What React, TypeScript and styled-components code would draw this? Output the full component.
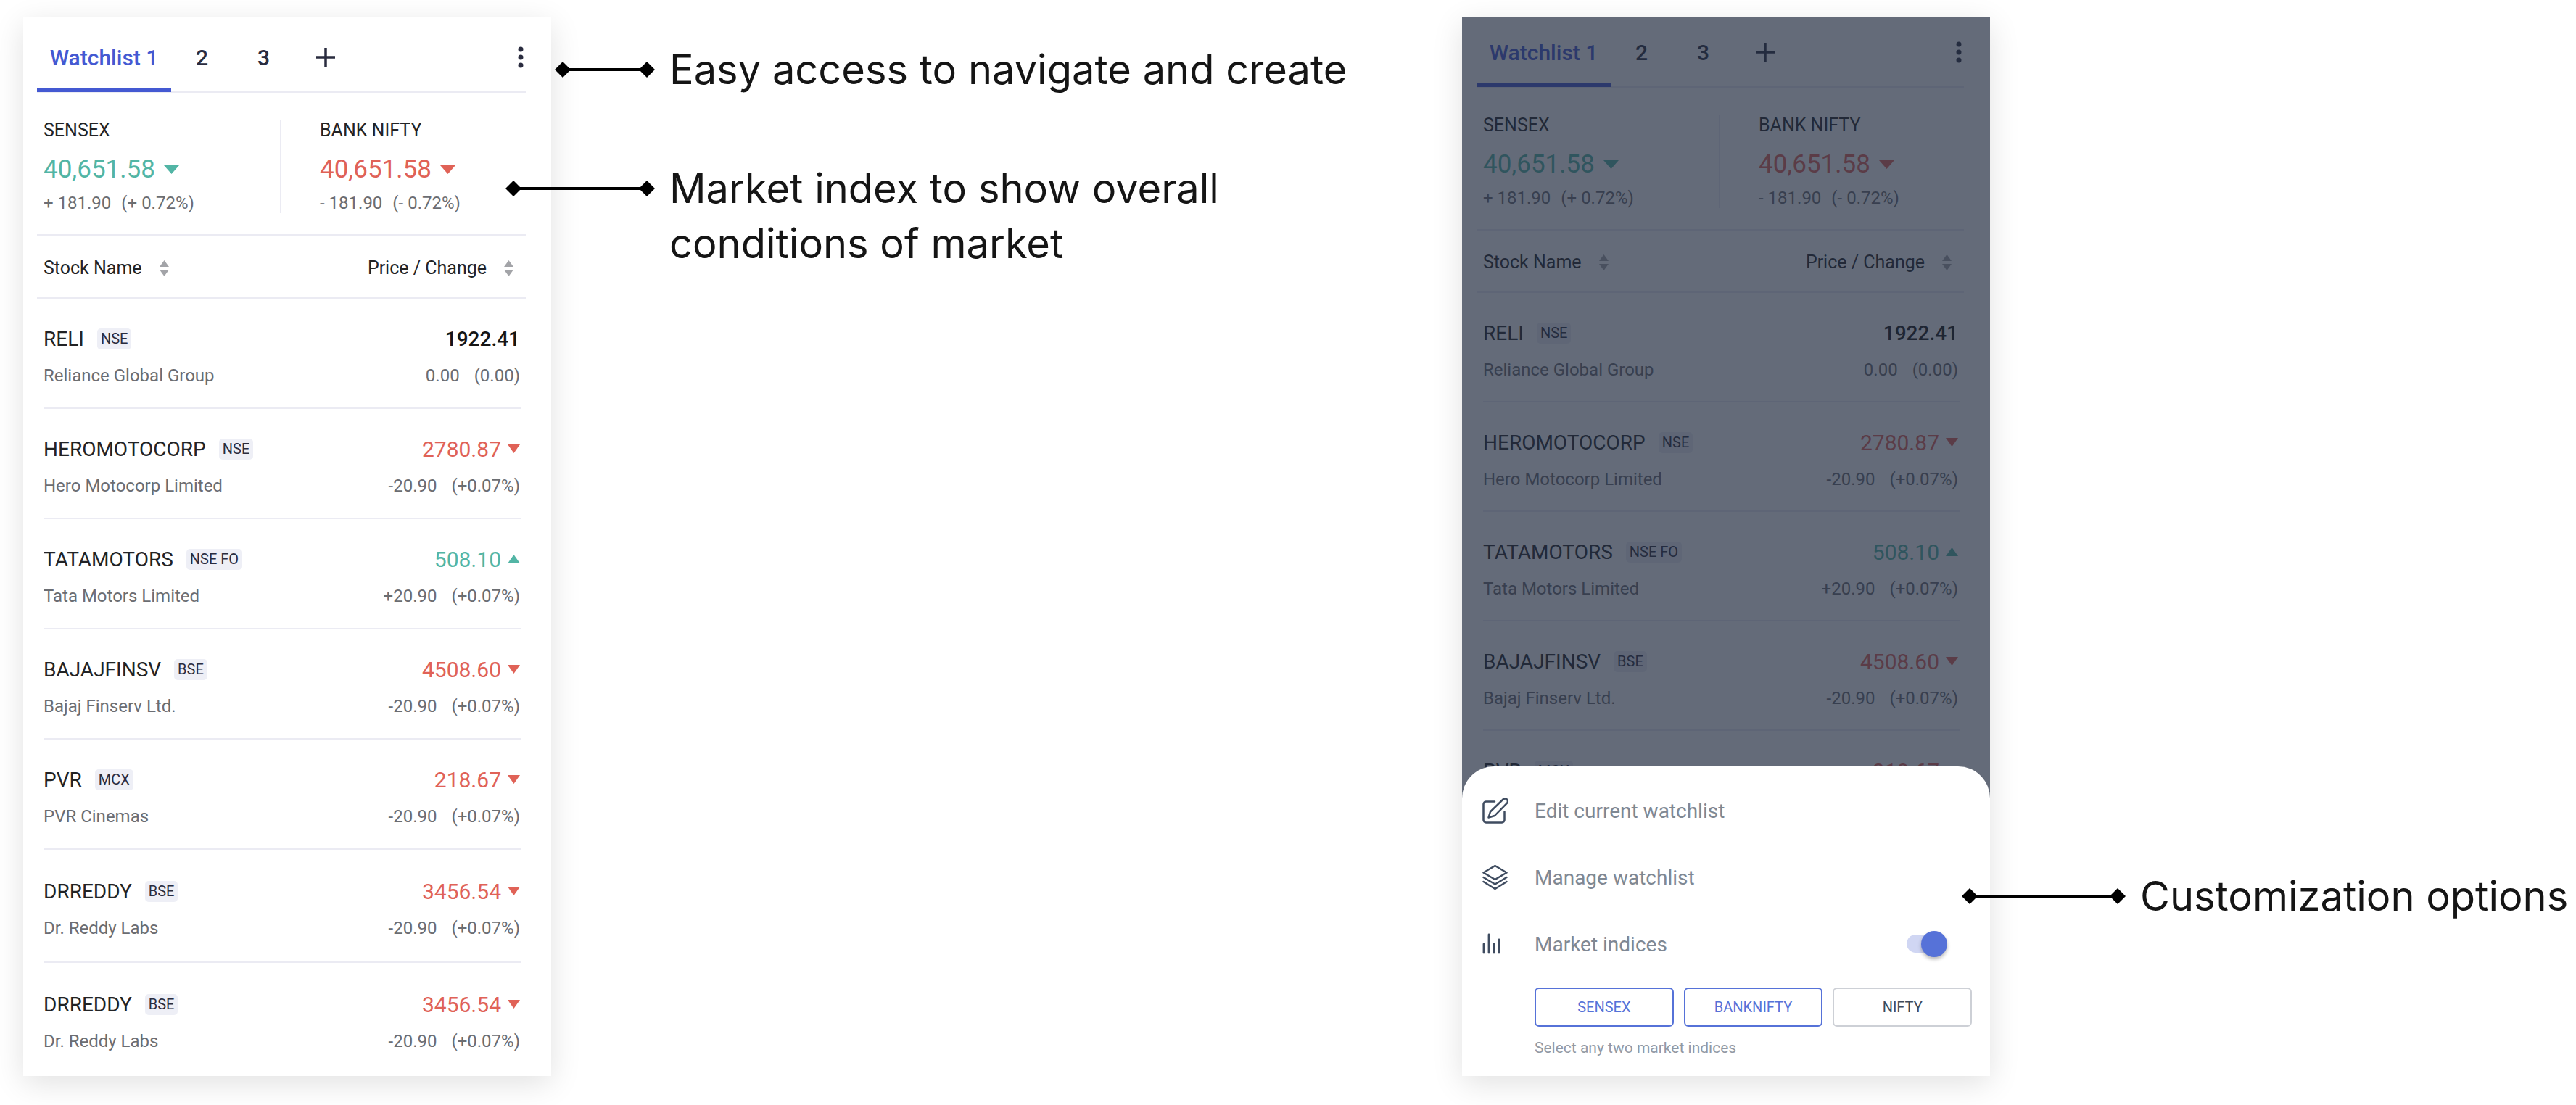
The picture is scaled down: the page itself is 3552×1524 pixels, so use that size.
import React, { useId, useState } from "react";
import styled, { createGlobalStyle, css } from "styled-components";

const color = {
  ink: "#222325",
  tab: "#2a2c3f",
  blue: "#4459d2",
  accent: "#5672d8",
  muted: "#6b6d72",
  line: "#ebebf3",
  chip: "#eeeff6",
  up: "#52b5a5",
  down: "#e06257",
  menu: "#7f8893",
};

const GlobalStyle = createGlobalStyle`
  *, *::before, *::after { box-sizing: border-box; }
  body { margin: 0; background: #fff; font-family: Roboto, "Liberation Sans", sans-serif; color: ${color.ink}; }
  button { font: inherit; color: inherit; background: none; border: 0; padding: 0; margin: 0; cursor: pointer; }
  svg { display: block; flex: none; }
`;

const Page = styled.main`
  display: grid;
  grid-template-columns: minmax(0, 728fr) minmax(0, 1256fr) minmax(0, 728fr) minmax(0, 808fr);
  padding: 24px 0 40px 32px;
  overflow: hidden;
`;

const Card = styled.section<{ $inset: number }>`
  position: relative;
  padding: 0 ${(p) => p.$inset + 16}px 0 ${(p) => p.$inset}px;
  background: #fff;
  box-shadow: 0 10px 40px rgba(0, 0, 0, 0.12);
`;

/* Tabs */

const TabBar = styled.nav<{ $compact?: boolean }>`
  display: flex;
  height: ${(p) => (p.$compact ? 97 : 104)}px;
  padding-top: ${(p) => (p.$compact ? 0 : 7)}px;
  border-bottom: 2px solid ${color.line};
`;

const Tab = styled.button<{ $active?: boolean; $wide?: boolean }>`
  display: flex;
  align-items: center;
  justify-content: center;
  width: ${(p) => (p.$wide ? 185 : 85)}px;
  margin-bottom: -1px;
  padding-top: ${(p) => (p.$active ? 5 : 0)}px;
  font-size: 30px;
  font-weight: 500;
  color: ${(p) => (p.$active ? color.blue : color.tab)};
  border-bottom: ${(p) => (p.$active ? `5px solid ${color.blue}` : "0")};
`;

const MoreButton = styled.button`
  display: flex;
  align-items: center;
  margin-left: auto;
  padding: 0 3px;
`;

/* Market indices */

const IndexRow = styled.div`
  display: grid;
  grid-template-columns: 1fr 1fr;
  padding: 38px 0 29px;
  border-bottom: 2px solid ${color.line};
`;

const IndexCell = styled.div<{ $divided?: boolean }>`
  padding-left: ${(p) => (p.$divided ? 9 : 53)}px;
  ${(p) => p.$divided && css`border-right: 2px solid ${color.line};`}
`;

const IndexLabel = styled.div`
  font-size: 25px;
  line-height: 28px;
`;

const IndexValue = styled.div<{ $tone: string }>`
  display: flex;
  align-items: center;
  gap: 12px;
  margin: 20px 0 12px;
  font-size: 35px;
  line-height: 40px;
  color: ${(p) => p.$tone};
`;

const Change = styled.div<{ $gap: number }>`
  display: flex;
  gap: ${(p) => p.$gap}px;
  font-size: 24px;
  line-height: 28px;
  color: ${color.muted};
  white-space: nowrap;
`;

/* Stocks */

const StockTable = styled.table`
  width: 100%;
  border-collapse: collapse;
`;

const HeadCell = styled.th<{ $end?: boolean; $compact?: boolean }>`
  height: ${(p) => (p.$compact ? 85 : 86)}px;
  padding: ${(p) => (p.$end ? "4px 17px 0 0" : "4px 0 0 9px")};
  border-bottom: 2px solid ${color.line};
  font-weight: 400;
`;

const SortButton = styled.button<{ $end?: boolean }>`
  display: flex;
  align-items: center;
  gap: 24px;
  margin-left: ${(p) => (p.$end ? "auto" : "0")};
  font-size: 25px;
  line-height: 32px;
`;

const Cell = styled.td<{ $end?: boolean }>`
  padding: ${(p) => (p.$end ? "0 6px 0 0" : "0 0 0 9px")};
`;

const rowPadding = {
  compact: "40px 2px 29px 0",
  normal: "40px 2px 30px 0",
  roomy: "42px 2px 32px 0",
};

const CellBody = styled.div<{ $end?: boolean; $density: keyof typeof rowPadding; $last?: boolean }>`
  display: flex;
  flex-direction: column;
  gap: 22px;
  align-items: ${(p) => (p.$end ? "flex-end" : "flex-start")};
  padding: ${(p) => rowPadding[p.$density]};
  border-bottom: 2px solid ${(p) => (p.$last ? "transparent" : color.line)};
`;

const Line = styled.div`
  display: flex;
  align-items: center;
  height: 30px;
  white-space: nowrap;
`;

const Symbol = styled.span`
  font-size: 28px;
  margin-right: 18px;
`;

const Chip = styled.span`
  padding: 0 5px;
  border-radius: 5px;
  background: ${color.chip};
  color: ${color.tab};
  font-size: 20px;
  line-height: 29px;
`;

const Price = styled.span<{ $tone: string; $strong?: boolean }>`
  display: flex;
  align-items: center;
  gap: 9px;
  font-size: ${(p) => (p.$strong ? 28 : 30)}px;
  font-weight: ${(p) => (p.$strong ? 500 : 400)};
  color: ${(p) => p.$tone};
`;

const Company = styled.div`
  font-size: 24px;
  line-height: 28px;
  color: ${color.muted};
  white-space: nowrap;
`;

/* Bottom sheet */

const Scrim = styled.div`
  position: absolute;
  inset: 0;
  background: rgba(34, 44, 64, 0.7);
`;

const Sheet = styled.div`
  position: absolute;
  left: 0;
  right: 0;
  bottom: 0;
  padding: 15px 25px 24px 28px;
  border-radius: 44px 44px 0 0;
  background: #fff;
`;

const sheetRow = css`
  display: flex;
  align-items: center;
  gap: 36px;
  width: 100%;
  height: 92px;
  padding-right: 34px;
  font-size: 28px;
  text-align: left;
  color: ${color.menu};
`;

const SheetAction = styled.button`
  ${sheetRow}
`;

const SheetSetting = styled.div`
  ${sheetRow}
`;

const SwitchLabel = styled.label`
  flex: 1;
  cursor: pointer;
`;

const Switch = styled.input`
  appearance: none;
  position: relative;
  width: 56px;
  height: 36px;
  margin: 0;
  cursor: pointer;

  &::before {
    content: "";
    position: absolute;
    inset: 5px 6px 6px 0;
    border-radius: 13px;
    background: #d0d6f3;
  }

  &::after {
    content: "";
    position: absolute;
    top: 0;
    left: 0;
    width: 36px;
    height: 36px;
    border-radius: 50%;
    background: #98a2b3;
    box-shadow: 0 3px 5px rgba(0, 0, 0, 0.28);
  }

  &:checked::after {
    left: 20px;
    background: ${color.accent};
  }
`;

const Choices = styled.div`
  display: grid;
  grid-template-columns: repeat(3, 1fr);
  gap: 14px;
  margin: 14px 0 14px 72px;
`;

const Choice = styled.button<{ $on: boolean }>`
  height: 54px;
  border: 2px solid ${(p) => (p.$on ? color.accent : "#cdd0d6")};
  border-radius: 6px;
  font-size: 20px;
  color: ${(p) => (p.$on ? color.accent : "#3d4a5c")};
`;

const Hint = styled.p`
  margin: 0 0 0 72px;
  font-size: 21px;
  line-height: 30px;
  color: #9299a4;
`;

/* Callouts */

const Notes = styled.aside<{ $top: number }>`
  position: relative;
  z-index: 1;
  display: flex;
  flex-direction: column;
  gap: 88px;
  padding-top: ${(p) => p.$top}px;
`;

const Note = styled.div<{ $start: number }>`
  display: flex;
  align-items: flex-start;
  gap: 20px;
  margin-left: ${(p) => p.$start}px;
`;

const Connector = styled.div<{ $length: number }>`
  display: flex;
  align-items: center;
  justify-content: space-between;
  flex: none;
  width: ${(p) => p.$length}px;
  height: 76px;
  background: linear-gradient(#000, #000) center / calc(100% - 16px) 4px no-repeat;
`;

const NoteText = styled.p`
  margin: 0;
  font-family: Inter, "Liberation Sans", sans-serif;
  font-size: 56px;
  line-height: 76px;
  color: #151515;
  white-space: nowrap;
`;

const Diamond = () => (
  <svg width="22" height="22" viewBox="0 0 22 22" aria-hidden="true">
    <path d="M11 0 22 11 11 22 0 11Z" fill="#000" />
  </svg>
);

const Arrow = ({ up, wide }: { up?: boolean; wide?: boolean }) => (
  <svg width={wide ? 21 : 17} height="12" viewBox="0 0 20 12" preserveAspectRatio="none" aria-hidden="true">
    <path d={up ? "M0 12h20L10 0Z" : "M0 0h20L10 12Z"} fill="currentColor" />
  </svg>
);

const SortIcon = () => (
  <svg width="13" height="22" viewBox="0 0 13 22" aria-hidden="true">
    <path d="M0 9h13L6.5 0ZM0 13h13l-6.5 9Z" fill="#a3a4a8" />
  </svg>
);

const PlusIcon = () => (
  <svg width="26" height="26" viewBox="0 0 26 26" aria-hidden="true">
    <path d="M13 0v26M0 13h26" stroke={color.tab} strokeWidth="3.5" />
  </svg>
);

const DotsIcon = () => (
  <svg width="8" height="30" viewBox="0 0 8 30" aria-hidden="true">
    <circle cx="4" cy="4" r="3.5" fill={color.tab} />
    <circle cx="4" cy="15" r="3.5" fill={color.tab} />
    <circle cx="4" cy="26" r="3.5" fill={color.tab} />
  </svg>
);

const iconProps = {
  width: 36,
  height: 36,
  viewBox: "0 0 36 36",
  fill: "none",
  stroke: "#3f4c60",
  strokeWidth: 2.5,
  strokeLinecap: "round" as const,
  strokeLinejoin: "round" as const,
  "aria-hidden": true,
};

const EditIcon = () => (
  <svg {...iconProps}>
    <path d="M17 5.500H5a3.500 3.500 0 0 0-3.500 3.500v22a3.500 3.500 0 0 0 3.500 3.500h22a3.500 3.500 0 0 0 3.500-3.500V19.500" />
    <path d="M28.500 2.500a3.700 3.700 0 0 1 5.300 5.300L17 25l-8.500 2.500 2.500-8Z" />
  </svg>
);

const LayersIcon = () => (
  <svg {...iconProps}>
    <path d="M17.500 2 33.500 11.500 17.500 21 1.500 11.500Z" />
    <path d="M1.500 18 17.500 27.500 33.500 18M1.500 24 17.500 34 33.500 24" />
  </svg>
);

const BarsIcon = () => (
  <svg {...iconProps}>
    <path d="M2 18v12M9 5v25M16 18v12M23 12v18" strokeWidth="2.800" />
  </svg>
);

type Trend = "up" | "down" | "flat";
type Stock = {
  symbol: string;
  exchange: string;
  company: string;
  price: string;
  change: string;
  percent: string;
  trend: Trend;
};

const tone: Record<Trend, string> = { up: color.up, down: color.down, flat: "#151515" };

const stocks: Stock[] = [
  { symbol: "RELI", exchange: "NSE", company: "Reliance Global Group", price: "1922.41", change: "0.00", percent: "(0.00)", trend: "flat" },
  { symbol: "HEROMOTOCORP", exchange: "NSE", company: "Hero Motocorp Limited", price: "2780.87", change: "-20.90", percent: "(+0.07%)", trend: "down" },
  { symbol: "TATAMOTORS", exchange: "NSE FO", company: "Tata Motors Limited", price: "508.10", change: "+20.90", percent: "(+0.07%)", trend: "up" },
  { symbol: "BAJAJFINSV", exchange: "BSE", company: "Bajaj Finserv Ltd.", price: "4508.60", change: "-20.90", percent: "(+0.07%)", trend: "down" },
  { symbol: "PVR", exchange: "MCX", company: "PVR Cinemas", price: "218.67", change: "-20.90", percent: "(+0.07%)", trend: "down" },
  { symbol: "DRREDDY", exchange: "BSE", company: "Dr. Reddy Labs", price: "3456.54", change: "-20.90", percent: "(+0.07%)", trend: "down" },
  { symbol: "DRREDDY", exchange: "BSE", company: "Dr. Reddy Labs", price: "3456.54", change: "-20.90", percent: "(+0.07%)", trend: "down" },
];

const indices = [
  { name: "SENSEX", value: "40,651.58", change: "+ 181.90", percent: "(+ 0.72%)", tone: color.up },
  { name: "BANK NIFTY", value: "40,651.58", change: "- 181.90", percent: "(- 0.72%)", tone: color.down },
];

function Watchlist({ items, compact }: { items: Stock[]; compact?: boolean }) {
  const [active, setActive] = useState(0);
  return (
    <>
      <TabBar $compact={compact}>
        {["Watchlist 1", "2", "3"].map((label, i) => (
          <Tab key={label} $wide={i === 0} $active={i === active} onClick={() => setActive(i)}>
            {label}
          </Tab>
        ))}
        <Tab aria-label="Add watchlist">
          <PlusIcon />
        </Tab>
        <MoreButton aria-label="More options">
          <DotsIcon />
        </MoreButton>
      </TabBar>
      <IndexRow>
        {indices.map((item, i) => (
          <IndexCell key={item.name} $divided={i === 0}>
            <IndexLabel>{item.name}</IndexLabel>
            <IndexValue $tone={item.tone}>
              {item.value}
              <Arrow wide />
            </IndexValue>
            <Change $gap={14}>
              <span>{item.change}</span>
              <span>{item.percent}</span>
            </Change>
          </IndexCell>
        ))}
      </IndexRow>
      <StockTable>
        <thead>
          <tr>
            <HeadCell scope="col" $compact={compact}>
              <SortButton>
                Stock Name <SortIcon />
              </SortButton>
            </HeadCell>
            <HeadCell scope="col" $compact={compact} $end>
              <SortButton $end>
                Price / Change <SortIcon />
              </SortButton>
            </HeadCell>
          </tr>
        </thead>
        <tbody>
          {items.map((s, i) => {
            const density = compact ? "compact" : i > 4 ? "roomy" : "normal";
            const last = i === items.length - 1;
            return (
              <tr key={i}>
                <Cell>
                  <CellBody $density={density} $last={last}>
                    <Line>
                      <Symbol>{s.symbol}</Symbol>
                      <Chip>{s.exchange}</Chip>
                    </Line>
                    <Company>{s.company}</Company>
                  </CellBody>
                </Cell>
                <Cell $end>
                  <CellBody $density={density} $last={last} $end>
                    <Line>
                      <Price $tone={tone[s.trend]} $strong={s.trend === "flat"}>
                        {s.price}
                        {s.trend !== "flat" && <Arrow up={s.trend === "up"} />}
                      </Price>
                    </Line>
                    <Change $gap={20}>
                      <span>{s.change}</span>
                      <span>{s.percent}</span>
                    </Change>
                  </CellBody>
                </Cell>
              </tr>
            );
          })}
        </tbody>
      </StockTable>
    </>
  );
}

function OptionsSheet() {
  const switchId = useId();
  const [shown, setShown] = useState(true);
  const [picked, setPicked] = useState(["SENSEX", "BANKNIFTY"]);
  const toggle = (name: string) =>
    setPicked((now) => (now.includes(name) ? now.filter((n) => n !== name) : [...now, name].slice(-2)));
  return (
    <Sheet>
      <SheetAction>
        <EditIcon />
        Edit current watchlist
      </SheetAction>
      <SheetAction>
        <LayersIcon />
        Manage watchlist
      </SheetAction>
      <SheetSetting>
        <BarsIcon />
        <SwitchLabel htmlFor={switchId}>Market indices</SwitchLabel>
        <Switch id={switchId} type="checkbox" checked={shown} onChange={(e) => setShown(e.target.checked)} />
      </SheetSetting>
      <Choices>
        {["SENSEX", "BANKNIFTY", "NIFTY"].map((name) => (
          <Choice key={name} $on={picked.includes(name)} aria-pressed={picked.includes(name)} onClick={() => toggle(name)}>
            {name}
          </Choice>
        ))}
      </Choices>
      <Hint>Select any two market indices</Hint>
    </Sheet>
  );
}

function Callout({ start, length, children }: { start: number; length: number; children: React.ReactNode }) {
  return (
    <Note $start={start}>
      <Connector $length={length}>
        <Diamond />
        <Diamond />
      </Connector>
      <NoteText>{children}</NoteText>
    </Note>
  );
}

export default function App() {
  return (
    <>
      <GlobalStyle />
      <Page>
        <Card $inset={19}>
          <Watchlist items={stocks} />
        </Card>
        <Notes $top={34}>
          <Callout start={5} length={138}>
            Easy access to navigate and create
          </Callout>
          <Callout start={-63} length={206}>
            Market index to show overall
            <br />
            conditions of market
          </Callout>
        </Notes>
        <Card $inset={20}>
          <Watchlist items={stocks.slice(0, 5)} compact />
          <Scrim />
          <OptionsSheet />
        </Card>
        <Notes $top={1174}>
          <Callout start={-39} length={226}>
            Customization options
          </Callout>
        </Notes>
      </Page>
    </>
  );
}
